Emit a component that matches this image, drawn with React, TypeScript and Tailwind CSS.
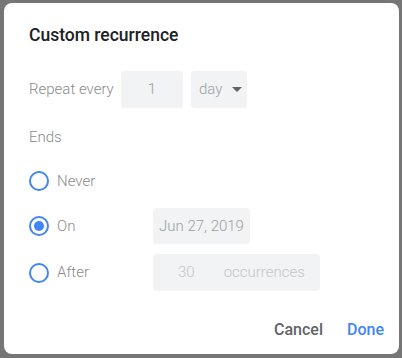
import React, { useState } from 'react';

type EndMode = 'never' | 'on' | 'after';

const Radio: React.FC<{ checked: boolean; onClick: () => void }> = ({ checked, onClick }) => (
  <button
    onClick={onClick}
    className="w-[20px] h-[20px] rounded-full border-2 border-[#4285f4] flex items-center justify-center shrink-0"
  >
    {checked && <span className="w-[10px] h-[10px] rounded-full bg-[#4285f4]" />}
  </button>
);

const App: React.FC = () => {
  const [mode, setMode] = useState<EndMode>('on');

  return (
    <div className="w-[402px] h-[358px] bg-[#767676] pt-[3px] pl-[4px] font-['Roboto',sans-serif]">
      <div className="w-[395px] h-[351px] bg-white rounded-[8px] flex flex-col pl-[25px] pr-[15px]">
        {/* Titulo */}
        <h1 className="mt-[20px] text-[17.5px] font-medium text-[#202124] leading-[24px]">Custom recurrence</h1>

        {/* Repetir */}
        <div className="mt-[24px] flex items-center">
          <span className="text-[15px] font-light text-[#8a8a8a] w-[92px]">Repeat every</span>
          <div className="w-[62px] h-[37px] rounded-[4px] bg-[#f1f3f4] flex items-center justify-center text-[15px] font-light text-[#9aa0a6]">
            1
          </div>
          <div className="ml-[8px] w-[56px] h-[37px] rounded-[4px] bg-[#f1f3f4] flex items-center pl-[8px] gap-[10px] text-[15px] font-light text-[#9aa0a6]">
            day
            <svg width="10" height="5" viewBox="0 0 10 5"><path d="M0 0h10L5 5z" fill="#5f6368" /></svg>
          </div>
        </div>

        <span className="mt-[19px] text-[15px] font-light text-[#8a8a8a] leading-[20px]">Ends</span>

        {/* Opcoes */}
        <div className="mt-[24px] flex items-center h-[20px]">
          <Radio checked={mode === 'never'} onClick={() => setMode('never')} />
          <span className="ml-[8px] text-[15px] font-light text-[#8a8a8a]">Never</span>
        </div>

        <div className="mt-[17px] flex items-center h-[36px]">
          <Radio checked={mode === 'on'} onClick={() => setMode('on')} />
          <span className="ml-[8px] w-[96px] text-[15px] font-light text-[#8a8a8a]">On</span>
          <div className="w-[97px] h-[36px] rounded-[4px] bg-[#f1f3f4] flex items-center justify-center text-[15px] font-light text-[#9aa0a6]">
            Jun 27, 2019
          </div>
        </div>

        <div className="mt-[10px] flex items-center h-[37px]">
          <Radio checked={mode === 'after'} onClick={() => setMode('after')} />
          <span className="ml-[8px] w-[96px] text-[15px] font-light text-[#8a8a8a]">After</span>
          <div className="w-[167px] h-[37px] rounded-[4px] bg-[#f1f3f4] flex items-center text-[15px] font-light text-[#c4c7c9]">
            <span className="ml-[25px]">30</span>
            <span className="ml-[29px]">occurrences</span>
          </div>
        </div>

        {/* Acoes */}
        <div className="mt-[27px] flex justify-end items-center gap-[24px]">
          <button className="text-[16px] font-medium text-[#5f6368]">Cancel</button>
          <button className="text-[16px] font-medium text-[#4285f4]">Done</button>
        </div>
      </div>
    </div>
  );
};

export default App;
